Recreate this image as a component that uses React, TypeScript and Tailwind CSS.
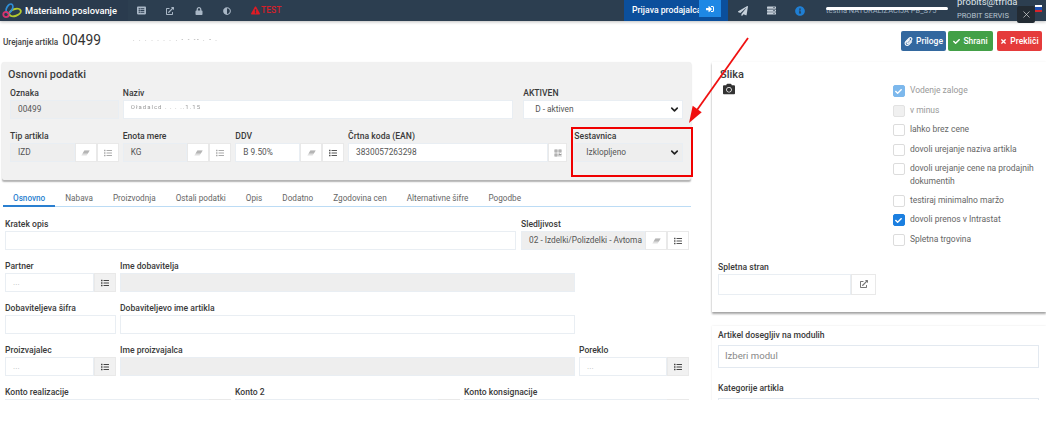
import type { ReactNode } from "react"
import {
  FaAdjust,
  FaCamera,
  FaCheck,
  FaExclamationTriangle,
  FaExternalLinkAlt,
  FaInfoCircle,
  FaList,
  FaListAlt,
  FaLock,
  FaPaperclip,
  FaPaperPlane,
  FaQrcode,
  FaServer,
  FaSignInAlt,
  FaTimes,
} from "react-icons/fa"
import { ChevronDown, X } from "lucide-react"

const tabs = [
  "Osnovno",
  "Nabava",
  "Proizvodnja",
  "Ostali podatki",
  "Opis",
  "Dodatno",
  "Zgodovina cen",
  "Alternativne šifre",
  "Pogodbe",
]

const checks = [
  { label: "Vodenje zaloge", state: "locked" },
  { label: "v minus", state: "disabled" },
  { label: "lahko brez cene", state: "off" },
  { label: "dovoli urejanje naziva artikla", state: "off" },
  { label: "dovoli urejanje cene na prodajnih dokumentih", state: "off" },
  { label: "testiraj minimalno maržo", state: "off" },
  { label: "dovoli prenos v Intrastat", state: "on" },
  { label: "Spletna trgovina", state: "off" },
]

function Label({ children }: { children: ReactNode }) {
  return <div className="h-[13px] text-[8.6px] leading-[13px] font-medium text-[#3a3a3a] whitespace-nowrap">{children}</div>
}

function Field({ value = "", muted = false, className = "" }: { value?: string; muted?: boolean; className?: string }) {
  return (
    <div
      className={`h-[19px] flex items-center px-[7px] border border-[#e9eef3] text-[8.3px] text-[#555] whitespace-nowrap overflow-hidden ${muted ? "bg-[#eeeeee]" : "bg-white"} ${className}`}
    >
      {value}
    </div>
  )
}

function IconBtn({ children, shaded = false, className = "w-[22px]" }: { children: ReactNode; shaded?: boolean; className?: string }) {
  return (
    <div
      className={`h-[19px] shrink-0 flex items-center justify-center border border-[#e9e9e9] text-[#555] ${shaded ? "bg-[#f1f1f1]" : "bg-white"} ${className}`}
    >
      {children}
    </div>
  )
}

function Eraser() {
  return (
    <svg width="9" height="6" viewBox="0 0 9 6" className="text-[#b5b5b5]">
      <path d="M3.4 0.5 H8.6 L5.6 5.5 H0.4 Z" fill="currentColor" opacity="0.45" />
      <path d="M3.4 0.5 H8.6 L6.8 3.5 H1.6 Z" fill="currentColor" />
    </svg>
  )
}

function Lookup({ value, muted = false, faded = false }: { value: string; muted?: boolean; faded?: boolean }) {
  return (
    <div className="flex">
      <Field value={value} muted={muted} className="flex-1 min-w-0" />
      <IconBtn>
        <Eraser />
      </IconBtn>
      <IconBtn>
        <FaList size={8} className={faded ? "text-[#aaa]" : "text-[#555]"} />
      </IconBtn>
    </div>
  )
}

function Picker({ value = "..." }: { value?: string }) {
  return (
    <div className="flex">
      <Field value={value} className="flex-1 min-w-0 !text-[#bbb]" />
      <IconBtn shaded>
        <FaList size={8} className="text-[#444]" />
      </IconBtn>
    </div>
  )
}

function Select({ value, muted = false, className = "" }: { value: string; muted?: boolean; className?: string }) {
  return (
    <div
      className={`h-[19px] flex items-center justify-between pl-[11px] pr-[2px] border border-[#e9eef3] text-[8.3px] text-[#555] ${muted ? "bg-[#eeeeee]" : "bg-white"} ${className}`}
    >
      {value}
      <ChevronDown size={11} strokeWidth={3.5} className="text-[#222]" />
    </div>
  )
}

function CheckRow({ label, state }: { label: string; state: string }) {
  const box =
    state === "on"
      ? "bg-[#1b7fe0] border-[#1b7fe0]"
      : state === "locked"
        ? "bg-[#7db8ec] border-[#7db8ec]"
        : state === "disabled"
          ? "bg-[#f0f0f0] border-[#e2e2e2]"
          : "bg-white border-[#dcdcdc]"
  return (
    <div className="flex gap-[5px]">
      <div className={`w-[12px] h-[12px] mt-[1px] shrink-0 rounded-[2px] border flex items-center justify-center ${box}`}>
        {(state === "on" || state === "locked") && <FaCheck size={7} className="text-white" />}
      </div>
      <div className={`text-[8.5px] leading-[12.5px] ${state === "locked" || state === "disabled" ? "text-[#999]" : "text-[#666]"}`}>
        {label}
      </div>
    </div>
  )
}

function Logo() {
  return (
    <svg width="20" height="16" viewBox="0 0 20 16" fill="none" className="shrink-0">
      <ellipse cx="13" cy="9.5" rx="6" ry="3.4" stroke="#b5c92e" strokeWidth="1.9" transform="rotate(-18 13 9.5)" />
      <ellipse cx="7.5" cy="5.5" rx="2.8" ry="4.8" stroke="#2f8fd8" strokeWidth="1.8" transform="rotate(28 7.5 5.5)" />
      <circle cx="4" cy="11.5" r="2.7" stroke="#d8346f" strokeWidth="1.8" />
    </svg>
  )
}

export default function App() {
  return (
    <div className="relative w-[1046px] h-[424px] bg-white overflow-hidden font-['Roboto',sans-serif]">
      {/* top bar */}
      <header className="relative h-[21px] bg-[#2c3e50] flex items-center shadow-[0_1px_3px_rgba(0,0,0,0.25)] text-white">
        <div className="w-[128px] h-full flex items-center pl-[2px] gap-[3px] bg-[#2a3b4e]">
          <Logo />
          <span className="text-[9.3px] font-medium whitespace-nowrap">Materialno poslovanje</span>
        </div>
        <div className="w-[496px] flex items-center text-[#a9b7c6]">
          <FaListAlt size={9} className="ml-[9px]" />
          <FaExternalLinkAlt size={8} className="ml-[20px]" />
          <FaLock size={8} className="ml-[21px]" />
          <FaAdjust size={8} className="ml-[20px]" />
          <FaExclamationTriangle size={9} className="ml-[20px] text-[#e01b24]" />
          <span className="ml-[1px] text-[8.5px] font-medium text-[#d4202a]">TEST</span>
        </div>
        <div className="w-[104px] h-full flex items-start bg-[#0b4f9c]">
          <span className="pl-[8px] w-[75px] h-full flex items-center text-[8.7px] font-medium whitespace-nowrap">Prijava prodajalca</span>
          <div className="w-[22px] h-[17px] flex items-center justify-center bg-[#1e88e5]">
            <FaSignInAlt size={8} />
          </div>
        </div>
        <FaPaperPlane size={10} className="ml-[10px] text-[#c6d0da]" />
        <FaServer size={9} className="ml-[19px] text-[#c6d0da]" />
        <FaInfoCircle size={10} className="ml-[19px] text-[#1f7fd4]" />
        <div className="relative ml-[21px] w-[122px] text-[7.5px] whitespace-nowrap text-[#9fb0c0] overflow-hidden">
          testna NATURALIZACIJA PB_S75
          <div className="absolute left-0 top-[2px] w-[122px] h-[3px] rounded-full bg-white" />
        </div>
        <div className="ml-[9px] w-[60px] h-full flex flex-col leading-none">
          <span className="text-[9.5px] -mt-[3px] text-[#dfe5ea]">probits@tfrida</span>
          <span className="mt-[5px] text-[7.5px] text-[#b8c4cf] whitespace-nowrap">PROBIT SERVIS</span>
        </div>
      </header>

      <main className="h-[379px] overflow-hidden">
        {/* title row */}
        <div className="h-[41px] flex items-start">
          <div className="pl-[3px] pt-[9px] flex items-baseline gap-[4px] text-[#333]">
            <span className="text-[8.2px] font-medium text-[#444]">Urejanje artikla</span>
            <span className="text-[13.8px] leading-[20px]">00499</span>
            <span className="ml-[28px] -translate-y-[4px] text-[6px] tracking-[1.5px] text-[#888] blur-[0.6px]">. . . . . . . . - - -- . - .</span>
          </div>
          <div className="ml-auto mr-[4px] mt-[10px] flex gap-[2px] text-[8.5px] font-medium text-white">
            <div className="w-[45px] h-[20px] flex items-center justify-center gap-[3px] rounded-[2px] bg-[#33689f]">
              <FaPaperclip size={9} />
              Priloge
            </div>
            <div className="w-[45px] h-[20px] flex items-center justify-center gap-[3px] rounded-[2px] bg-[#43a047]">
              <FaCheck size={7} />
              Shrani
            </div>
            <div className="ml-[2px] w-[45px] h-[20px] flex items-center justify-center gap-[3px] rounded-[2px] bg-[#e53b3b]">
              <FaTimes size={7} />
              Prekliči
            </div>
          </div>
        </div>

        <div className="flex">
          {/* left column */}
          <div className="w-[689px] ml-[2px] shrink-0">
            <section className="h-[118px] bg-[#f1f1f1] rounded-[2px] px-[8px] pt-[5px] shadow-[0_1.5px_1.5px_rgba(0,0,0,0.3)]">
              <h2 className="-ml-[2px] h-[15px] text-[10.8px] leading-[15px] font-medium text-[#3c3c3c]">Osnovni podatki</h2>
              <div className="mt-[5px] flex">
                <div className="w-[109px]">
                  <Label>Oznaka</Label>
                  <Field value="00499" muted />
                </div>
                <div className="ml-[4px] w-[391px]">
                  <Label>Naziv</Label>
                  <div className="h-[19px] px-[7px] pt-[1px] bg-white border border-[#e9eef3] text-[6px] tracking-[1px] text-[#999] blur-[0.5px] whitespace-nowrap">
                    Oładalcd  .  .  . ..1.15
                  </div>
                </div>
                <div className="ml-[10px] w-[160px]">
                  <Label>AKTIVEN</Label>
                  <Select value="D - aktiven" />
                </div>
              </div>
              <div className="mt-[11px] flex">
                <div className="w-[109px]">
                  <Label>Tip artikla</Label>
                  <Lookup value="IZD" muted faded />
                </div>
                <div className="ml-[4px] w-[109px]">
                  <Label>Enota mere</Label>
                  <Lookup value="KG" muted faded />
                </div>
                <div className="ml-[4px] w-[109px]">
                  <Label>DDV</Label>
                  <Lookup value="B 9.50%" />
                </div>
                <div className="ml-[4px] w-[220px]">
                  <Label>Črtna koda (EAN)</Label>
                  <div className="flex">
                    <Field value="3830057263298" className="flex-1" />
                    <IconBtn className="w-[19px]">
                      <FaQrcode size={8} className="text-[#999]" />
                    </IconBtn>
                  </div>
                </div>
                <div className="ml-[7px] w-[109px]">
                  <Label>Sestavnica</Label>
                  <Select value="Izklopljeno" muted />
                </div>
              </div>
            </section>

            <nav className="mt-[12px] h-[15px] ml-[1px] flex border-b border-[#bcdcf5] text-[8.2px] text-[#666]">
              {tabs.map((tab, i) => (
                <div
                  key={tab}
                  className={`h-[15px] px-[10px] leading-[13px] whitespace-nowrap ${i === 0 ? "border-b-2 border-[#2a7fd0] text-[#2a7fd0] font-medium" : ""}`}
                >
                  {tab}
                </div>
              ))}
            </nav>

            <div className="pl-[3px] pt-[11px]">
              <div className="flex">
                <div className="w-[511px]">
                  <Label>Kratek opis</Label>
                  <Field />
                </div>
                <div className="ml-[5px] w-[168px]">
                  <Label>Sledljivost</Label>
                  <Lookup value="02 - Izdelki/Polizdelki - Avtoma" muted />
                </div>
              </div>
              <div className="mt-[10px] flex">
                <div className="w-[111px]">
                  <Label>Partner</Label>
                  <Picker />
                </div>
                <div className="ml-[4px] w-[455px]">
                  <Label>Ime dobavitelja</Label>
                  <Field muted />
                </div>
              </div>
              <div className="mt-[10px] flex">
                <div className="w-[111px]">
                  <Label>Dobaviteljeva šifra</Label>
                  <Field />
                </div>
                <div className="ml-[4px] w-[455px]">
                  <Label>Dobaviteljevo ime artikla</Label>
                  <Field />
                </div>
              </div>
              <div className="mt-[10px] flex">
                <div className="w-[111px]">
                  <Label>Proizvajalec</Label>
                  <Picker />
                </div>
                <div className="ml-[4px] w-[455px]">
                  <Label>Ime proizvajalca</Label>
                  <Field muted />
                </div>
                <div className="ml-[4px] w-[110px]">
                  <Label>Poreklo</Label>
                  <Picker />
                </div>
              </div>
              <div className="mt-[10px] flex">
                <div className="w-[226px]">
                  <Label>Konto realizacije</Label>
                  <Picker value="" />
                </div>
                <div className="ml-[4px] w-[225px]">
                  <Label>Konto 2</Label>
                  <Picker value="" />
                </div>
                <div className="ml-[4px] w-[225px]">
                  <Label>Konto konsignacije</Label>
                  <Picker value="" />
                </div>
              </div>
            </div>
          </div>

          {/* right column */}
          <div className="ml-[21px] flex-1 min-w-0">
            <section className="h-[250px] bg-white px-[6px] pt-[5px] shadow-[0_1.5px_2px_rgba(0,0,0,0.35),0_0_2px_rgba(0,0,0,0.06)]">
              <div className="flex">
                <div className="w-[176px]">
                  <h2 className="ml-[2px] h-[15px] text-[11px] leading-[15px] font-medium text-[#3c3c3c]">Slika</h2>
                  <FaCamera size={12} className="mt-[1px] ml-[5px] text-[#333]" />
                </div>
                <div className="mt-[17px] w-[148px] flex flex-col gap-[6.5px]">
                  {checks.map((c) => (
                    <CheckRow key={c.label} label={c.label} state={c.state} />
                  ))}
                </div>
              </div>
              <div className="mt-[15px]">
                <Label>Spletna stran</Label>
                <div className="flex w-[158px]">
                  <Field className="flex-1 !h-[21px]" />
                  <IconBtn className="w-[25px] !h-[21px]">
                    <FaExternalLinkAlt size={8} className="text-[#777]" />
                  </IconBtn>
                </div>
              </div>
            </section>
            <section className="mt-[14px] h-[80px] bg-white px-[6px] pt-[3px] shadow-[0_0_2px_rgba(0,0,0,0.1)]">
              <Label>Artikel dosegljiv na modulih</Label>
              <div className="mt-[3px] w-[321px] h-[23px] flex items-center px-[6px] border border-[#e3e9f0] text-[9.6px] text-[#888]">Izberi modul</div>
              <div className="mt-[14px]">
                <Label>Kategorije artikla</Label>
                <div className="mt-[3px] w-[321px] h-[23px] border border-[#e3e9f0]" />
              </div>
            </section>
          </div>
        </div>
      </main>

      {/* screenshot annotations and overlays */}
      <div className="absolute left-[571px] top-[127px] w-[122px] h-[50px] border-2 border-[#f00000]" />
      <svg className="absolute left-[680px] top-[35px]" width="72" height="95" viewBox="0 0 72 95" fill="none">
        <path d="M68 3 L17 75" stroke="#f01010" strokeWidth="1.8" />
        <path d="M9 88 L12.7 70.8 L21.7 77.2 Z" fill="#f01010" />
      </svg>
      <div className="absolute left-[1017px] top-[6px] w-[18px] h-[17px] rounded-[2px] bg-[#232b33] flex items-center justify-center">
        <X size={11} strokeWidth={1.5} className="text-[#ddd]" />
      </div>
      <div className="absolute left-[1035px] top-[5px] w-[7px] h-[7px] bg-[linear-gradient(#fff_33%,#1d4fb0_33%_66%,#d8232a_66%)]" />
    </div>
  )
}
